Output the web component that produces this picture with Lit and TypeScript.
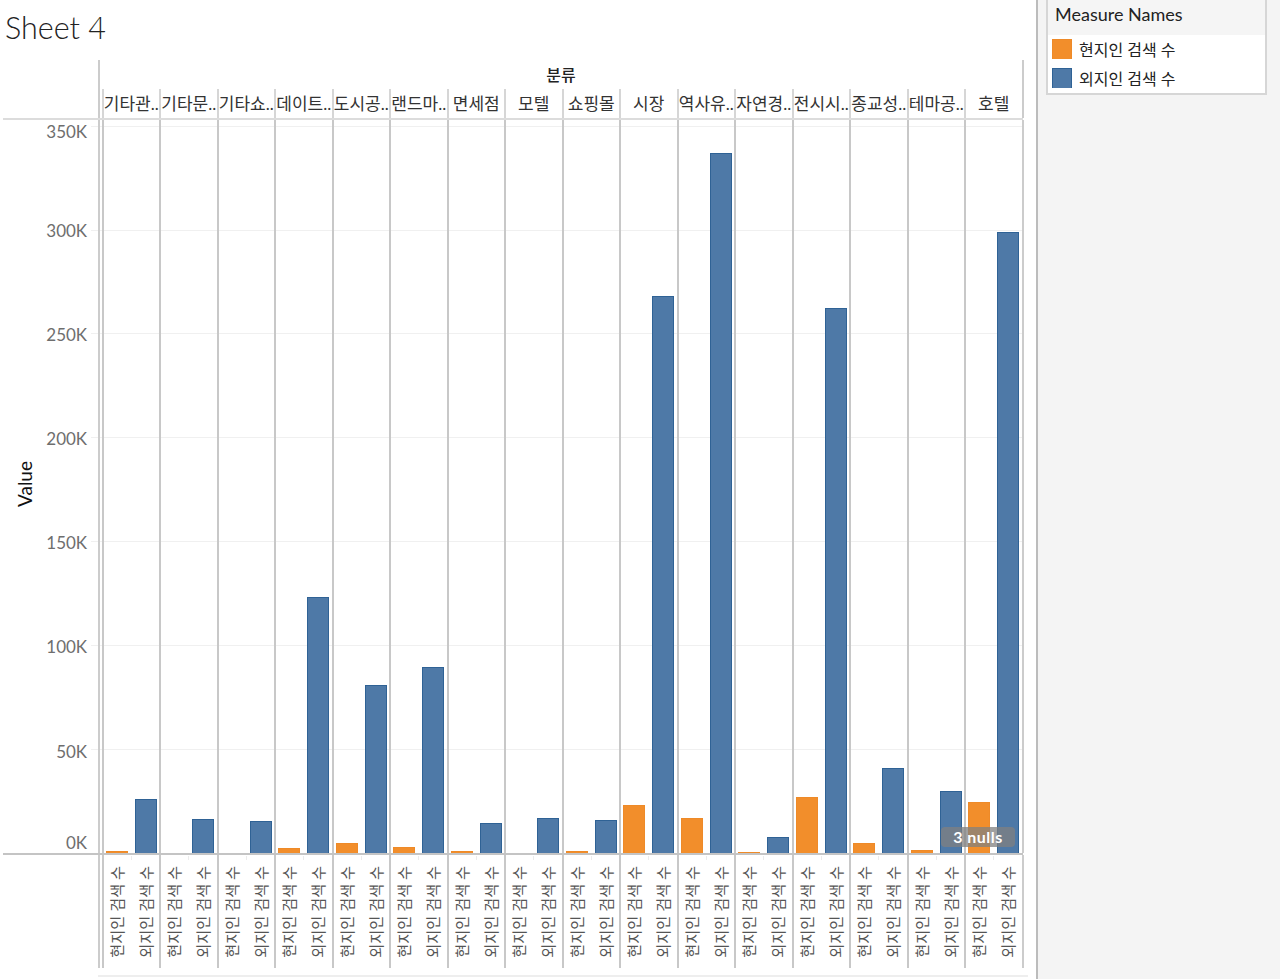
import { LitElement, css, html } from "lit";
import { customElement } from "lit/decorators.js";

// heights are bar pixels above the axis, null = no mark
const panes: { name: string; local: number | null; visitor: number }[] = [
  { name: "기타관..", local: 2, visitor: 54 },
  { name: "기타문..", local: null, visitor: 34 },
  { name: "기타쇼..", local: null, visitor: 32 },
  { name: "데이트..", local: 5, visitor: 256 },
  { name: "도시공..", local: 10, visitor: 168 },
  { name: "랜드마..", local: 6, visitor: 186 },
  { name: "면세점", local: 2, visitor: 30 },
  { name: "모텔", local: null, visitor: 35 },
  { name: "쇼핑몰", local: 2, visitor: 33 },
  { name: "시장", local: 48, visitor: 557 },
  { name: "역사유..", local: 35, visitor: 700 },
  { name: "자연경..", local: 1, visitor: 16 },
  { name: "전시시..", local: 56, visitor: 545 },
  { name: "종교성..", local: 10, visitor: 85 },
  { name: "테마공..", local: 3, visitor: 62 },
  { name: "호텔", local: 51, visitor: 621 },
];

const ticks = ["350K", "300K", "250K", "200K", "150K", "100K", "50K", "0K"];

@customElement("app-root")
export class AppRoot extends LitElement {
  static styles = css`
    :host {
      display: flex;
      width: 1280px;
      height: 979px;
      overflow: hidden;
      background: #fff;
      font-family: "Lato", "Noto Sans CJK KR", sans-serif;
      color: #333;
    }
    .main {
      width: 1036px;
      flex: none;
      border-right: 2px solid #bcbcbc;
      box-sizing: content-box;
    }
    .title {
      height: 60px;
      box-sizing: border-box;
      padding: 7px 0 0 5px;
      font-size: 30.5px;
      font-weight: 300;
      line-height: 40px;
      color: #222;
    }
    .row {
      display: flex;
    }
    .gutter {
      width: 98px;
      flex: none;
    }
    .strip {
      width: 926px;
      flex: none;
      box-sizing: border-box;
      border-left: 2px solid #cccccc;
      border-right: 2px solid #cccccc;
    }
    .field {
      height: 29px;
      line-height: 30px;
      text-align: center;
      font-size: 16px;
      font-weight: 500;
      color: #222;
    }
    .cells {
      display: flex;
      padding-left: 1.5px;
    }
    .head {
      width: 57.5px;
      height: 29px;
      flex: none;
      box-sizing: border-box;
      border-left: 2px solid #d6d6d6;
      font-size: 17px;
      line-height: 30px;
      text-align: center;
      white-space: nowrap;
      overflow: hidden;
      color: #333;
    }
    .rule {
      height: 2px;
      margin-left: 3px;
      width: 1020px;
      background: #dcdcdc;
    }
    .axis {
      display: flex;
      height: 733px;
    }
    .axis-title {
      width: 14px;
      margin-left: 18px;
      align-self: center;
      writing-mode: vertical-rl;
      transform: rotate(180deg);
      font-size: 19px;
      font-weight: 400;
      line-height: 14px;
      color: #111;
      margin-bottom: 5px;
    }
    .labels {
      width: 56px;
      margin-right: 1px;
      display: grid;
      grid-template-rows: 99px 104px 104px 104px 104px 105px 91px 20px;
      padding-top: 2px;
      box-sizing: border-box;
      text-align: right;
      font-size: 17px;
      line-height: 20px;
      color: #6e6e6e;
    }
    .grid-lines {
      background: repeating-linear-gradient(
        to top,
        transparent 0,
        transparent 102.9px,
        #f0f0f0 102.9px,
        #f0f0f0 103.9px
      );
    }
    .tick {
      width: 7px;
      height: 733px;
      margin-left: 3px;
    }
    .plot {
      display: flex;
      height: 733px;
      padding-left: 1.5px;
    }
    .pane {
      width: 57.5px;
      flex: none;
      box-sizing: border-box;
      border-left: 2px solid #c8c8c8;
      padding-left: 2px;
      display: flex;
      gap: 7px;
      align-items: flex-end;
    }
    .slot {
      width: 22px;
      display: flex;
      align-items: flex-end;
    }
    .bar {
      width: 100%;
      box-sizing: border-box;
    }
    .local {
      background: #f28e2b;
      border: 1px solid #ee8a28;
      border-bottom: 0;
    }
    .visitor {
      background: #4e79a7;
      border: 1px solid #2f6295;
      border-bottom: 0;
    }
    .base {
      height: 2px;
      margin-left: 3px;
      width: 1020px;
      background: #c4c4c4;
    }
    .foot {
      height: 113px;
    }
    .foot-pane {
      height: 113px;
      align-items: center;
      background: linear-gradient(#ececec, #ececec) 27px 1px / 1px 4px no-repeat;
    }
    .foot-label {
      width: 22px;
      text-align: center;
      writing-mode: vertical-rl;
      text-orientation: sideways;
      transform: rotate(180deg);
      font-size: 15.2px;
      line-height: 22px;
      white-space: nowrap;
      color: #555;
    }
    .end-rule {
      height: 2px;
      width: 930px;
      margin: 7px 0 0 98px;
      background: #eeeeee;
    }
    .chart {
      position: relative;
    }
    .nulls {
      position: absolute;
      left: 941px;
      top: 767px;
      width: 74px;
      height: 20px;
      border-radius: 4px;
      background: rgba(128, 128, 128, 0.75);
      color: #fff;
      font-size: 16px;
      letter-spacing: 0.5px;
      font-weight: 700;
      line-height: 20px;
      text-align: center;
    }
    .side {
      flex: 1;
      background: #f4f4f4;
      padding-left: 8px;
    }
    .legend {
      width: 221px;
      height: 95px;
      box-sizing: border-box;
      border: 2px solid #d6d6d6;
      border-top: 0;
      background: #fff;
    }
    .legend-head {
      height: 35px;
      padding: 3px 0 0 7px;
      box-sizing: border-box;
      background: #f5f5f5;
      font-size: 18px;
      line-height: 22px;
      color: #222;
    }
    .legend-row {
      display: flex;
      align-items: center;
      gap: 7px;
      height: 28.5px;
      padding-left: 4px;
      font-size: 16px;
      color: #222;
    }
    .swatch {
      width: 20px;
      height: 20px;
      box-sizing: border-box;
    }
  `;

  render() {
    return html`
      <div class="main">
        <div class="title">Sheet 4</div>
        <div class="chart">
          <div class="row">
            <div class="gutter"></div>
            <div class="strip">
              <div class="field">분류</div>
              <div class="cells">
                ${panes.map((p) => html`<div class="head">${p.name}</div>`)}
              </div>
            </div>
          </div>
          <div class="rule"></div>
          <div class="row">
            <div class="gutter axis">
              <div class="axis-title">Value</div>
              <div class="labels">${ticks.map((t) => html`<div>${t}</div>`)}</div>
              <div class="tick grid-lines"></div>
            </div>
            <div class="strip grid-lines">
              <div class="plot">
                ${panes.map(
                  (p) => html`
                    <div class="pane">
                      <div class="slot">
                        ${p.local === null
                          ? ""
                          : html`<div class="bar local" style="height:${p.local}px"></div>`}
                      </div>
                      <div class="slot">
                        <div class="bar visitor" style="height:${p.visitor}px"></div>
                      </div>
                    </div>
                  `
                )}
              </div>
            </div>
          </div>
          <div class="base"></div>
          <div class="row">
            <div class="gutter"></div>
            <div class="strip">
              <div class="plot foot">
                ${panes.map(
                  () => html`
                    <div class="pane foot-pane">
                      <div class="foot-label">현지인 검색 수</div>
                      <div class="foot-label">외지인 검색 수</div>
                    </div>
                  `
                )}
              </div>
            </div>
          </div>
          <div class="end-rule"></div>
          <div class="nulls">3 nulls</div>
        </div>
      </div>
      <div class="side">
        <div class="legend">
          <div class="legend-head">Measure Names</div>
          <div class="legend-row">
            <div class="swatch local"></div>
            현지인 검색 수
          </div>
          <div class="legend-row">
            <div class="swatch visitor"></div>
            외지인 검색 수
          </div>
        </div>
      </div>
    `;
  }
}
